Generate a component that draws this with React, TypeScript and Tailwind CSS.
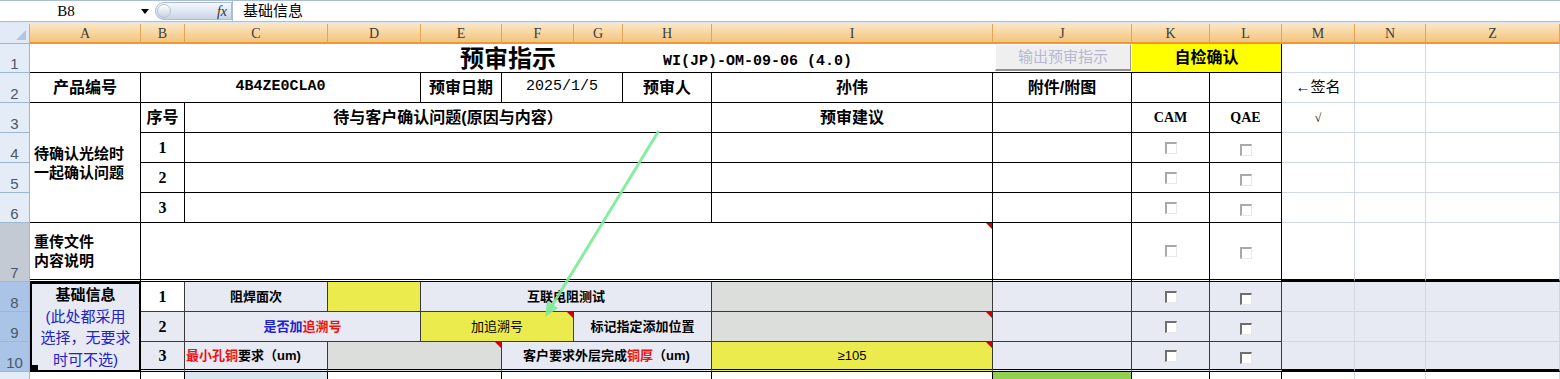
import React from 'react';

type CellProps = { className?: string; children?: React.ReactNode };

const Cell: React.FC<CellProps> = ({ className = '', children }) => (
  <div className={`relative flex items-center justify-center overflow-hidden whitespace-nowrap ${className}`}>{children}</div>
);

// red comment marker
const Tri = () => (
  <span className="absolute right-0 top-0 h-0 w-0 border-l-[6px] border-t-[6px] border-l-transparent border-t-[#cc0000]" />
);

const Box: React.FC<{ dim?: boolean }> = ({ dim }) => (
  <span
    className={`block h-[12px] w-[12px] border-b border-l-2 border-r border-t-2 border-b-[#e8e8e8] border-r-[#e8e8e8] bg-white ${
      dim ? 'border-l-[#a9a9a9] border-t-[#a9a9a9]' : 'border-l-[#6f6f6f] border-t-[#6f6f6f]'
    }`}
  />
);

const RowHead: React.FC<{ n?: number; className: string }> = ({ n, className }) => (
  <div className={`flex items-end justify-center border-b border-r border-[#9eb6ce] pb-[1px] font-['Liberation_Sans'] text-[15px] leading-none text-[#4b5867] ${className}`}>
    {n}
  </div>
);

const letters = ['A', 'B', 'C', 'D', 'E', 'F', 'G', 'H', 'I', 'J', 'K', 'L', 'M', 'N', 'Z'];

const T = 'border-b border-r border-black';
const G = 'border-b border-r border-[#d0d7e5]';
const V = 'border-b border-r border-[#3a3a3a] bg-[#e7e9f3]';
const DBL = 'border-r border-b-[3px] border-double border-r-black border-b-black';
const VDBL = 'border-r border-b-[3px] border-double border-r-[#3a3a3a] border-b-black bg-[#e7e9f3]';

export default function App() {
  return (
    <div className="relative h-[379px] w-[1560px] overflow-hidden bg-white font-['Liberation_Sans','Noto_Sans_CJK_SC',sans-serif] text-black">
      {/* formula bar */}
      <div className="flex h-[22px] items-center border-b border-t border-[#a9bfd6] bg-white">
        <div className="flex h-full w-[132px] items-center justify-center font-['Liberation_Serif'] text-[15px]">B8</div>
        <div className="flex w-[23px] items-center">
          <span className="ml-[9px] h-0 w-0 border-l-4 border-r-4 border-t-[5px] border-l-transparent border-r-transparent border-t-black" />
        </div>
        <div className="flex h-[18px] w-[77px] items-center justify-between rounded-l-full border border-[#a9bcd5] bg-linear-to-b from-[#f7f9fc] via-[#dfe7f2] to-[#c6d4e7] pl-[1px] pr-[4px]">
          <span className="h-[14px] w-[14px] rounded-full border border-[#b5c3d6] bg-linear-to-b from-white to-[#c9d3e0]" />
          <span className="font-['Liberation_Serif'] text-[14px] italic text-[#333]">fx</span>
        </div>
        <div className="flex h-full flex-1 items-center border-l border-[#a9bfd6] pl-[10px] text-[15px]">基础信息</div>
      </div>
      <div className="h-[2px] bg-[#dfe8f3]" />

      <div className="grid grid-cols-[30px_111px_44px_143px_93px_81px_72px_49px_89px_281px_139px_78px_72px_73px_71px_134px] grid-rows-[20px_29px_30px_30px_30px_30px_30px_59px_30px_30px_30px_30px]">
        {/* column headers */}
        <div className="relative col-start-1 row-start-1 border-b border-r border-[#9eb6ce] bg-[#e1eaf6]">
          <span className="absolute bottom-[3px] right-[3px] h-0 w-0 border-b-[10px] border-l-[10px] border-b-[#b6c6da] border-l-transparent" />
        </div>
        {letters.map((l) => (
          <div
            key={l}
            className="row-start-1 flex items-center justify-center border-b-2 border-r border-b-[#f29536] border-r-[#e2a35a] bg-linear-to-b from-[#fbe6c2] to-[#f3c47e] font-['Liberation_Serif'] text-[14px] text-[#3b3b3b]"
          >
            {l}
          </div>
        ))}

        {/* row headers */}
        <RowHead n={1} className="col-start-1 row-start-2 bg-[#e4ecf7]" />
        <RowHead n={2} className="col-start-1 row-start-3 bg-[#e4ecf7]" />
        <RowHead n={3} className="col-start-1 row-start-4 bg-[#e4ecf7]" />
        <RowHead n={4} className="col-start-1 row-start-5 bg-[#e4ecf7]" />
        <RowHead n={5} className="col-start-1 row-start-6 bg-[#e4ecf7]" />
        <RowHead n={6} className="col-start-1 row-start-7 bg-[#e4ecf7]" />
        <RowHead n={7} className="col-start-1 row-start-8 bg-[#c4cad3]" />
        <RowHead n={8} className="col-start-1 row-start-9 bg-[#a9c4e6]" />
        <RowHead n={9} className="col-start-1 row-start-10 bg-[#a9c4e6]" />
        <RowHead n={10} className="col-start-1 row-start-11 bg-[#a9c4e6]" />
        <RowHead className="col-start-1 row-start-12 bg-[#e4ecf7]" />

        {/* row 1 */}
        <Cell className="col-start-2 col-span-9 row-start-2 items-end justify-start border-b border-black pb-[1px]">
          <span className="ml-[430px] text-[24px] font-bold leading-none">预审指示</span>
          <span className="mb-[2px] ml-[107px] font-['Liberation_Mono'] text-[15px] font-bold leading-none">WI(JP)-OM-09-06 (4.0)</span>
        </Cell>
        <Cell className="col-start-11 row-start-2 items-start justify-start border-b border-black pl-[2px]">
          <div className="flex h-[27px] w-[136px] items-center justify-center border-b-2 border-l border-r border-t border-b-[#8f8f8f] border-l-white border-r-[#9a9a9a] border-t-white bg-[#efefef] text-[15px] text-[#b7b7d3]">
            输出预审指示
          </div>
        </Cell>
        <Cell className={`col-start-12 col-span-2 row-start-2 bg-[#ffff00] text-[16px] font-bold ${T}`}>自检确认</Cell>
        <Cell className={`col-start-14 row-start-2 ${G}`} />
        <Cell className={`col-start-15 row-start-2 ${G}`} />
        <Cell className={`col-start-16 row-start-2 ${G}`} />

        {/* row 2 */}
        <Cell className={`col-start-2 row-start-3 text-[16px] font-bold ${T}`}>产品编号</Cell>
        <Cell className={`col-start-3 col-span-3 row-start-3 font-['Liberation_Mono'] text-[15px] font-bold ${T}`}>4B4ZE0CLA0</Cell>
        <Cell className={`col-start-6 row-start-3 text-[16px] font-bold ${T}`}>预审日期</Cell>
        <Cell className={`col-start-7 col-span-2 row-start-3 font-['Liberation_Mono'] text-[15px] ${T}`}>2025/1/5</Cell>
        <Cell className={`col-start-9 row-start-3 text-[16px] font-bold ${T}`}>预审人</Cell>
        <Cell className={`col-start-10 row-start-3 text-[16px] font-bold ${T}`}>孙伟</Cell>
        <Cell className={`col-start-11 row-start-3 text-[16px] font-bold ${T}`}>附件/附图</Cell>
        <Cell className={`col-start-12 row-start-3 ${T}`} />
        <Cell className={`col-start-13 row-start-3 ${T}`} />
        <Cell className={`col-start-14 row-start-3 text-[15px] ${G}`}>←签名</Cell>
        <Cell className={`col-start-15 row-start-3 ${G}`} />
        <Cell className={`col-start-16 row-start-3 ${G}`} />

        {/* rows 3-6 */}
        <Cell className={`col-start-2 row-start-4 row-span-4 flex-col items-start pl-[4px] text-[15px] font-bold leading-[19px] ${T}`}>
          <span>待确认光绘时</span>
          <span>一起确认问题</span>
        </Cell>
        <Cell className={`col-start-3 row-start-4 text-[16px] font-bold ${T}`}>序号</Cell>
        <Cell className={`col-start-4 col-span-6 row-start-4 text-[16px] font-bold ${T}`}>待与客户确认问题(原因与内容）</Cell>
        <Cell className={`col-start-10 row-start-4 text-[16px] font-bold ${T}`}>预审建议</Cell>
        <Cell className={`col-start-11 row-start-4 ${T}`} />
        <Cell className={`col-start-12 row-start-4 font-['Liberation_Serif'] text-[14px] font-bold ${T}`}>CAM</Cell>
        <Cell className={`col-start-13 row-start-4 font-['Liberation_Serif'] text-[14px] font-bold ${T}`}>QAE</Cell>
        <Cell className={`col-start-14 row-start-4 font-['Liberation_Serif'] text-[12px] italic ${G}`}>√</Cell>
        <Cell className={`col-start-15 row-start-4 ${G}`} />
        <Cell className={`col-start-16 row-start-4 ${G}`} />

        <Cell className={`col-start-3 row-start-5 font-['Liberation_Serif'] text-[16px] font-bold ${T}`}>1</Cell>
        <Cell className={`col-start-4 col-span-6 row-start-5 ${T}`} />
        <Cell className={`col-start-10 row-start-5 ${T}`} />
        <Cell className={`col-start-11 row-start-5 ${T}`} />
        <Cell className={`col-start-12 row-start-5 ${T}`}><Box dim /></Cell>
        <Cell className={`col-start-13 row-start-5 pt-[4px] ${T}`}><Box dim /></Cell>
        <Cell className={`col-start-14 row-start-5 ${G}`} />
        <Cell className={`col-start-15 row-start-5 ${G}`} />
        <Cell className={`col-start-16 row-start-5 ${G}`} />

        <Cell className={`col-start-3 row-start-6 font-['Liberation_Serif'] text-[16px] font-bold ${T}`}>2</Cell>
        <Cell className={`col-start-4 col-span-6 row-start-6 ${T}`} />
        <Cell className={`col-start-10 row-start-6 ${T}`} />
        <Cell className={`col-start-11 row-start-6 ${T}`} />
        <Cell className={`col-start-12 row-start-6 ${T}`}><Box dim /></Cell>
        <Cell className={`col-start-13 row-start-6 pt-[4px] ${T}`}><Box dim /></Cell>
        <Cell className={`col-start-14 row-start-6 ${G}`} />
        <Cell className={`col-start-15 row-start-6 ${G}`} />
        <Cell className={`col-start-16 row-start-6 ${G}`} />

        <Cell className={`col-start-3 row-start-7 font-['Liberation_Serif'] text-[16px] font-bold ${T}`}>3</Cell>
        <Cell className={`col-start-4 col-span-6 row-start-7 ${T}`} />
        <Cell className={`col-start-10 row-start-7 ${T}`} />
        <Cell className={`col-start-11 row-start-7 ${T}`} />
        <Cell className={`col-start-12 row-start-7 ${T}`}><Box dim /></Cell>
        <Cell className={`col-start-13 row-start-7 pt-[4px] ${T}`}><Box dim /></Cell>
        <Cell className={`col-start-14 row-start-7 ${G}`} />
        <Cell className={`col-start-15 row-start-7 ${G}`} />
        <Cell className={`col-start-16 row-start-7 ${G}`} />

        {/* row 7 */}
        <Cell className={`col-start-2 row-start-8 flex-col items-start pl-[4px] text-[15px] font-bold leading-[19px] ${DBL}`}>
          <span>重传文件</span>
          <span>内容说明</span>
        </Cell>
        <Cell className={`col-start-3 col-span-8 row-start-8 ${DBL}`}>
          <Tri />
        </Cell>
        <Cell className={`col-start-11 row-start-8 ${DBL}`} />
        <Cell className={`col-start-12 row-start-8 ${DBL}`}><Box dim /></Cell>
        <Cell className={`col-start-13 row-start-8 pt-[4px] ${DBL}`}><Box dim /></Cell>
        <Cell className="col-start-14 row-start-8 border-b-[3px] border-r border-b-black border-r-[#d0d7e5]" />
        <Cell className="col-start-15 row-start-8 border-b-[3px] border-r border-b-black border-r-[#d0d7e5]" />
        <Cell className="col-start-16 row-start-8 border-b-[3px] border-r border-b-black border-r-[#d0d7e5]" />

        {/* rows 8-10 */}
        <Cell className="col-start-2 row-start-9 row-span-3 flex-col border-2 border-black bg-[#e7e9f3] text-[15px] leading-[21.5px]">
          <span className="font-bold">基础信息</span>
          <span className="text-[#2323c8]">(此处都采用</span>
          <span className="text-[#2323c8]">选择，无要求</span>
          <span className="text-[#2323c8]">时可不选)</span>
          <span className="absolute bottom-0 left-0 h-[5px] w-[6px] bg-black" />
        </Cell>

        <Cell className="col-start-3 row-start-9 border-b border-r border-[#3a3a3a] bg-white font-['Liberation_Serif'] text-[16px] font-bold">1</Cell>
        <Cell className={`col-start-4 row-start-9 text-[13px] font-bold ${V}`}>阻焊面次</Cell>
        <Cell className="col-start-5 row-start-9 border-b border-r border-[#3a3a3a] bg-[#ebeb4e]" />
        <Cell className={`col-start-6 col-span-4 row-start-9 text-[13px] font-bold ${V}`}>互联电阻测试</Cell>
        <Cell className="col-start-10 row-start-9 border-b border-r border-[#3a3a3a] bg-[#dbdedb]" />
        <Cell className={`col-start-11 row-start-9 ${V}`} />
        <Cell className={`col-start-12 row-start-9 ${V}`}><Box /></Cell>
        <Cell className={`col-start-13 row-start-9 pt-[4px] ${V}`}><Box /></Cell>
        <Cell className="col-start-14 row-start-9 border-b border-r border-[#d3d6de] bg-[#e7e9f3]" />
        <Cell className="col-start-15 row-start-9 border-b border-r border-[#d3d6de] bg-[#e7e9f3]" />
        <Cell className="col-start-16 row-start-9 border-b border-r border-[#d3d6de] bg-[#e7e9f3]" />

        <Cell className={`col-start-3 row-start-10 font-['Liberation_Serif'] text-[16px] font-bold ${V}`}>2</Cell>
        <Cell className={`col-start-4 col-span-2 row-start-10 text-[13px] font-bold ${V}`}>
          <span className="text-[#2222cc]">是否加</span>
          <span className="text-[#ee1111]">追溯号</span>
        </Cell>
        <Cell className="col-start-6 col-span-2 row-start-10 border-b border-r border-[#3a3a3a] bg-[#ebeb4e] text-[13px]">
          加追溯号
          <Tri />
        </Cell>
        <Cell className={`col-start-8 col-span-2 row-start-10 text-[13px] font-bold ${V}`}>标记指定添加位置</Cell>
        <Cell className="col-start-10 row-start-10 border-b border-r border-[#3a3a3a] bg-[#dbdedb]">
          <Tri />
        </Cell>
        <Cell className={`col-start-11 row-start-10 ${V}`} />
        <Cell className={`col-start-12 row-start-10 ${V}`}><Box /></Cell>
        <Cell className={`col-start-13 row-start-10 pt-[4px] ${V}`}><Box /></Cell>
        <Cell className="col-start-14 row-start-10 border-b border-r border-[#d3d6de] bg-[#e7e9f3]" />
        <Cell className="col-start-15 row-start-10 border-b border-r border-[#d3d6de] bg-[#e7e9f3]" />
        <Cell className="col-start-16 row-start-10 border-b border-r border-[#d3d6de] bg-[#e7e9f3]" />

        <Cell className={`col-start-3 row-start-11 font-['Liberation_Serif'] text-[16px] font-bold ${VDBL}`}>3</Cell>
        <Cell className={`col-start-4 row-start-11 justify-start pl-[1px] text-[13px] font-bold ${VDBL}`}>
          <span className="text-[#ee1111]">最小孔铜</span>
          <span>要求（um)</span>
        </Cell>
        <Cell className="col-start-5 col-span-2 row-start-11 border-b-[3px] border-r border-double border-b-black border-r-[#3a3a3a] bg-[#dbdedb]">
          <Tri />
        </Cell>
        <Cell className={`col-start-7 col-span-3 row-start-11 text-[13px] font-bold ${VDBL}`}>
          <span>客户要求外层完成</span>
          <span className="text-[#ee1111]">铜厚</span>
          <span>（um)</span>
        </Cell>
        <Cell className="col-start-10 row-start-11 border-b-[3px] border-r border-double border-b-black border-r-[#3a3a3a] bg-[#ebeb4e] text-[13px]">
          ≥105
          <Tri />
        </Cell>
        <Cell className={`col-start-11 row-start-11 ${VDBL}`} />
        <Cell className={`col-start-12 row-start-11 ${VDBL}`}><Box /></Cell>
        <Cell className={`col-start-13 row-start-11 pt-[4px] ${VDBL}`}><Box /></Cell>
        <Cell className="col-start-14 row-start-11 border-b-[3px] border-r border-b-black border-r-[#d3d6de] bg-[#e7e9f3]" />
        <Cell className="col-start-15 row-start-11 border-b-[3px] border-r border-b-black border-r-[#d3d6de] bg-[#e7e9f3]" />
        <Cell className="col-start-16 row-start-11 border-b-[3px] border-r border-b-black border-r-[#d3d6de] bg-[#e7e9f3]" />

        {/* row 11 */}
        <Cell className={`col-start-2 row-start-12 ${T}`} />
        <Cell className={`col-start-3 row-start-12 ${T}`} />
        <Cell className={`col-start-4 row-start-12 bg-[#dde6f0] ${T}`} />
        <Cell className={`col-start-5 col-span-2 row-start-12 ${T}`} />
        <Cell className={`col-start-7 col-span-3 row-start-12 ${T}`} />
        <Cell className={`col-start-10 row-start-12 ${T}`} />
        <Cell className={`col-start-11 row-start-12 bg-[#92d050] ${T}`} />
        <Cell className={`col-start-12 row-start-12 ${T}`} />
        <Cell className={`col-start-13 row-start-12 ${T}`} />
        <Cell className={`col-start-14 row-start-12 ${G}`} />
        <Cell className={`col-start-15 row-start-12 ${G}`} />
        <Cell className={`col-start-16 row-start-12 ${G}`} />
      </div>

      {/* drawn arrow shape over the sheet */}
      <svg className="pointer-events-none absolute left-0 top-0" width="1560" height="379" viewBox="0 0 1560 379">
        <line x1="658" y1="132" x2="550" y2="309" stroke="#7cec97" strokeWidth="3" strokeLinecap="round" opacity="0.9" />
        <polygon points="545,317 558,308 547,301" fill="#7cec97" opacity="0.9" />
      </svg>
    </div>
  );
}
